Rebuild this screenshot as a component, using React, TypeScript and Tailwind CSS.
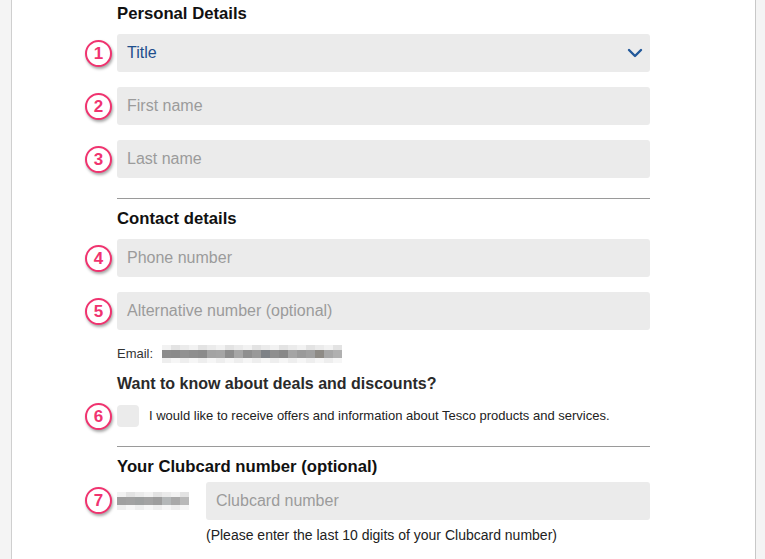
import React from "react";

const font = { fontFamily: '"Liberation Sans", Arial, Helvetica, sans-serif' };

const Marker = ({ n }: { n: string }) => (
  <div className="w-[27px] h-[27px] shrink-0 rounded-full bg-white border-[2.5px] border-[#f0336f] shadow-[1px_2px_3px_rgba(0,0,0,0.35)] flex items-center justify-center text-[#f0336f] text-[17px] leading-none font-bold">
    {n}
  </div>
);

const Row = ({ n, children }: { n?: string; children: React.ReactNode }) => (
  <div className="flex items-center">
    <div className="w-[32px] shrink-0">{n && <Marker n={n} />}</div>
    {children}
  </div>
);

const Field = ({ placeholder }: { placeholder: string }) => (
  <div className="w-[533px] h-[38px] rounded-[3px] bg-[#ebebeb] flex items-center px-[10px] text-[16px] text-[#9b9b9b]">
    {placeholder}
  </div>
);

const Heading = ({ children, small }: { children: React.ReactNode; small?: boolean }) => (
  <div className={`pl-[32px] leading-[24px] font-bold ${small ? "text-[16px] text-[#2a2a2a]" : "text-[16.7px] text-[#111]"}`}>
    {children}
  </div>
);

const Divider = () => <div className="ml-[32px] w-[533px] h-px bg-[#9a9a9a]" />;

const Pixelated = ({ shades }: { shades: string[] }) => (
  <div className="flex flex-col">
    <div className="flex">
      {shades.map((_, i) => (
        <div key={i} className={`w-[9px] h-[5px] ${i % 3 === 0 ? "bg-[#f2f2f2]" : i % 3 === 1 ? "bg-[#e3e3e3]" : "bg-[#ebebeb]"}`} />
      ))}
    </div>
    <div className="flex">
      {shades.map((c, i) => (
        <div key={i} className="w-[9px] h-[8px]" style={{ backgroundColor: c }} />
      ))}
    </div>
    <div className="flex">
      {shades.map((_, i) => (
        <div key={i} className={`w-[9px] h-[5px] ${i % 2 === 0 ? "bg-[#eeeeee]" : "bg-[#f6f6f6]"}`} />
      ))}
    </div>
  </div>
);

const emailShades = [
  "#8c8c8c", "#8a8a8a", "#929292", "#8e8e8e", "#8b8b8b", "#a3a3a3", "#a5a5a5", "#8d8d8d", "#a6a6a6", "#8f8f8f",
  "#999999", "#7e8287", "#8f8f8f", "#888888", "#a4a4a4", "#9a9a9a", "#a0a0a0", "#8e8b86", "#a7a7a7", "#b0b0b0",
];
const cardShades = ["#a0a0a0", "#a2a2a2", "#9ea0a0", "#a3a3a3", "#9d9d9d", "#b4b7b8", "#a9a9a9", "#b9b9b9"];

export default function App() {
  return (
    <div className="w-[765px] h-[559px] flex overflow-hidden bg-white" style={font}>
      <div className="w-[12px] shrink-0 bg-[#f4f4f4] border-r border-[#cfcfcf]" />
      <div className="flex-1 bg-white pl-[73px]">
        <div className="flex flex-col">
          <div className="pt-[2px]"><Heading>Personal Details</Heading></div>
          <div className="mt-[8px] flex flex-col gap-[15px]">
            <Row n="1">
              <div className="w-[533px] h-[38px] rounded-[3px] bg-[#ebebeb] flex items-center justify-between pl-[10px] pr-[7px] text-[16px] text-[#1e4e8c]">
                <span>Title</span>
                <svg width="16" height="10" viewBox="0 0 16 10" fill="none">
                  <path d="M2 2l6 6 6-6" stroke="#22589a" strokeWidth="2.4" strokeLinecap="round" strokeLinejoin="round" />
                </svg>
              </div>
            </Row>
            <Row n="2"><Field placeholder="First name" /></Row>
            <Row n="3"><Field placeholder="Last name" /></Row>
          </div>
          <div className="mt-[20px]"><Divider /></div>
          <div className="mt-[8px]"><Heading>Contact details</Heading></div>
          <div className="mt-[8px] flex flex-col gap-[15px]">
            <Row n="4"><Field placeholder="Phone number" /></Row>
            <Row n="5"><Field placeholder="Alternative number (optional)" /></Row>
          </div>
          <div className="mt-[14px] pl-[32px] flex items-center gap-[9px] text-[13px] text-[#333]">
            <span>Email:</span>
            <Pixelated shades={emailShades} />
          </div>
          <div className="mt-[8px]"><Heading small>Want to know about deals and discounts?</Heading></div>
          <div className="mt-[7px]">
            <Row n="6">
              <div className="w-[22px] h-[22px] rounded-[4px] bg-[#ebebeb] shrink-0" />
              <span className="ml-[10px] text-[13px] text-[#222]">
                I would like to receive offers and information about Tesco products and services.
              </span>
            </Row>
          </div>
          <div className="mt-[16px]"><Divider /></div>
          <div className="mt-[8px]"><Heading>Your Clubcard number (optional)</Heading></div>
          <div className="mt-[3px]">
            <Row n="7">
              <div className="w-[89px] shrink-0 flex"><Pixelated shades={cardShades} /></div>
              <div className="w-[444px] h-[38px] rounded-[3px] bg-[#ebebeb] flex items-center px-[10px] text-[16px] text-[#9b9b9b]">
                Clubcard number
              </div>
            </Row>
          </div>
          <div className="mt-[5px] pl-[121px] text-[14px] leading-[20px] text-[#222]">
            (Please enter the last 10 digits of your Clubcard number)
          </div>
        </div>
      </div>
      <div className="w-[10px] shrink-0 bg-[#f4f4f4] border-l border-[#c8c8c8]" />
    </div>
  );
}
